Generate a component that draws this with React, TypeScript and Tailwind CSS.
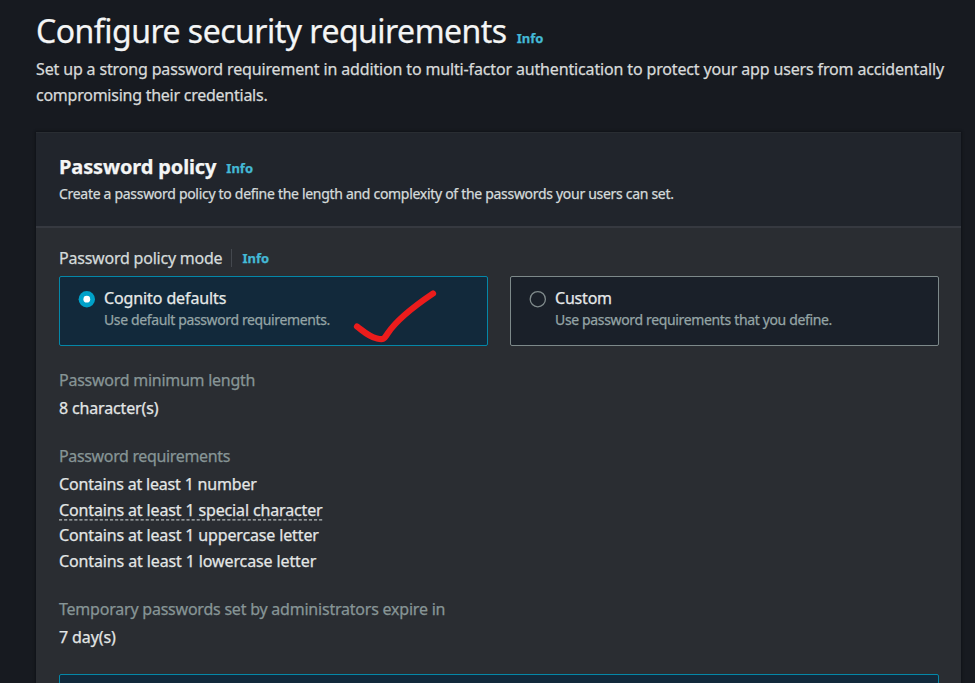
import type { ReactNode } from "react";

function Info({ className = "" }: { className?: string }) {
  return (
    <a className={`font-bold text-[#44b9d6] text-[13px] leading-[20px] ${className}`}>Info</a>
  );
}

function Tile({
  checked,
  title,
  description,
  children,
}: {
  checked?: boolean;
  title: ReactNode;
  description: ReactNode;
  children?: ReactNode;
}) {
  const box = checked ? "border-[#0487a8] bg-[#12293b]" : "border-[#7d898a] bg-[#1a2029]";
  return (
    <div className={`relative flex h-[70px] flex-1 gap-[9px] rounded-[2px] border pl-[18px] pt-[10px] ${box}`}>
      <svg viewBox="0 0 17 17" className="mt-[4px] h-[17px] w-[17px] shrink-0 overflow-visible">
        {checked ? (
          <>
            <circle cx="8.8" cy="8.2" r="8.2" fill="#00a1c9" />
            <circle cx="8.8" cy="8.2" r="3.4" fill="#fff" />
          </>
        ) : (
          <circle cx="8.8" cy="8.2" r="7.6" fill="none" stroke="#808b8c" strokeWidth="1.3" />
        )}
      </svg>
      <div>
        <div className="whitespace-nowrap text-[16px] leading-[22px] text-[#e6e9e9]">{title}</div>
        <div className="whitespace-nowrap text-[14px] leading-[22px] text-[#95a5a6]">{description}</div>
      </div>
      {children}
    </div>
  );
}

export default function App() {
  return (
    <main className="h-[683px] w-[975px] overflow-hidden bg-[#171a20] pl-[36px] pr-[14px] font-['Noto_Sans',sans-serif] [-webkit-text-stroke:0.25px]">
      <header className="h-[132px] pt-[8px]">
        <div className="flex items-baseline gap-[10px]">
          <h1 className="whitespace-nowrap text-[32px] leading-[46px] text-[#f4f5f5]">
            <span className="tracking-[-0.52px]">Configure security requirements</span>
          </h1>
          <Info />
        </div>
        <p className="mt-[2px] whitespace-nowrap text-[16px] leading-[26px] text-[#d8dada]">
          <span className="tracking-[-0.15px]">
            Set up a strong password requirement in addition to multi-factor authentication to protect your app users from accidentally
          </span>
          <br />
          <span className="tracking-[-0.25px]">compromising their credentials.</span>
        </p>
      </header>

      <section className="h-[600px] border-t border-[#292d32] bg-[#2a2d32] shadow-[0_0_2px_1px_#101318]">
        <div className="h-[95px] border-b-2 border-[#363940] bg-[#21252c] pl-[23px] pt-[20px]">
          <div className="flex items-baseline gap-[10px]">
            <h2 className="whitespace-nowrap text-[20px] font-bold leading-[28px] text-[#f4f5f5]">
              <span className="tracking-[-0.13px]">Password policy</span>
            </h2>
            <Info className="relative -top-px" />
          </div>
          <p className="whitespace-nowrap text-[14px] leading-[25px] text-[#d5dbdb]">
            <span className="tracking-[-0.3px]">
              Create a password policy to define the length and complexity of the passwords your users can set.
            </span>
          </p>
        </div>

        <div className="pl-[23px] pr-[22px] pt-[19px]">
          <div className="flex h-[22px] items-center">
            <span className="whitespace-nowrap text-[16px] leading-[22px] text-[#d5dbdb]">
              <span className="tracking-[-0.22px]">Password policy mode</span>
            </span>
            <span className="ml-[9px] mr-[10px] h-[18px] w-px bg-[#44484e]" />
            <Info />
          </div>

          <div className="mt-[7px] flex gap-[22px]">
            <Tile
              checked
              title={<span className="tracking-[-0.11px]">Cognito defaults</span>}
              description={<span className="tracking-[-0.37px]">Use default password requirements.</span>}
            >
              <svg viewBox="0 0 90 60" className="absolute left-[290px] top-[8px] h-[60px] w-[90px]" fill="none">
                <path
                  d="M7 41.5C13 46 19 52 27 53.5C34 55 34 54 38 48C46 36 63 22 83 8.500"
                  stroke="#eb1c1c"
                  strokeWidth="6.2"
                  strokeLinecap="round"
                  strokeLinejoin="round"
                />
              </svg>
            </Tile>
            <Tile
              title={<span className="tracking-[-0.2px]">Custom</span>}
              description={<span className="tracking-[-0.35px]">Use password requirements that you define.</span>}
            />
          </div>

          <dl className="mt-[21px] whitespace-nowrap text-[16px] leading-[26px] text-[#e3e6e6]">
            <dt className="text-[#879596]">
              <span className="tracking-[-0.26px]">Password minimum length</span>
            </dt>
            <dd className="mt-[2px]">
              <span className="tracking-[-0.15px]">8 character(s)</span>
            </dd>
            <dt className="mt-[22px] text-[#879596]">
              <span className="tracking-[-0.35px]">Password requirements</span>
            </dt>
            <dd className="mt-[3px] leading-[25.7px]">
              <div><span className="tracking-[-0.18px]">Contains at least 1 number</span></div>
              <div className="relative w-fit">
                <span className="tracking-[-0.14px]">Contains at least 1 special character</span>
                <svg className="absolute bottom-[2px] left-0 h-[2px] w-full">
                  <path d="M0 0.9H400" stroke="#b9bfc0" strokeWidth="1.3" strokeDasharray="3.1 2" />
                </svg>
              </div>
              <div><span className="tracking-[-0.145px]">Contains at least 1 uppercase letter</span></div>
              <div><span className="tracking-[-0.12px]">Contains at least 1 lowercase letter</span></div>
            </dd>
            <dt className="mt-[21px] text-[#879596]">
              <span className="tracking-[-0.22px]">Temporary passwords set by administrators expire in</span>
            </dt>
            <dd className="mt-[2px]">
              <span className="tracking-[-0.1px]">7 day(s)</span>
            </dd>
          </dl>
          <div className="mt-[24px] h-[60px] rounded-[2px] border border-[#0487a8] bg-[#12293b]" />
        </div>
      </section>
    </main>
  );
}
